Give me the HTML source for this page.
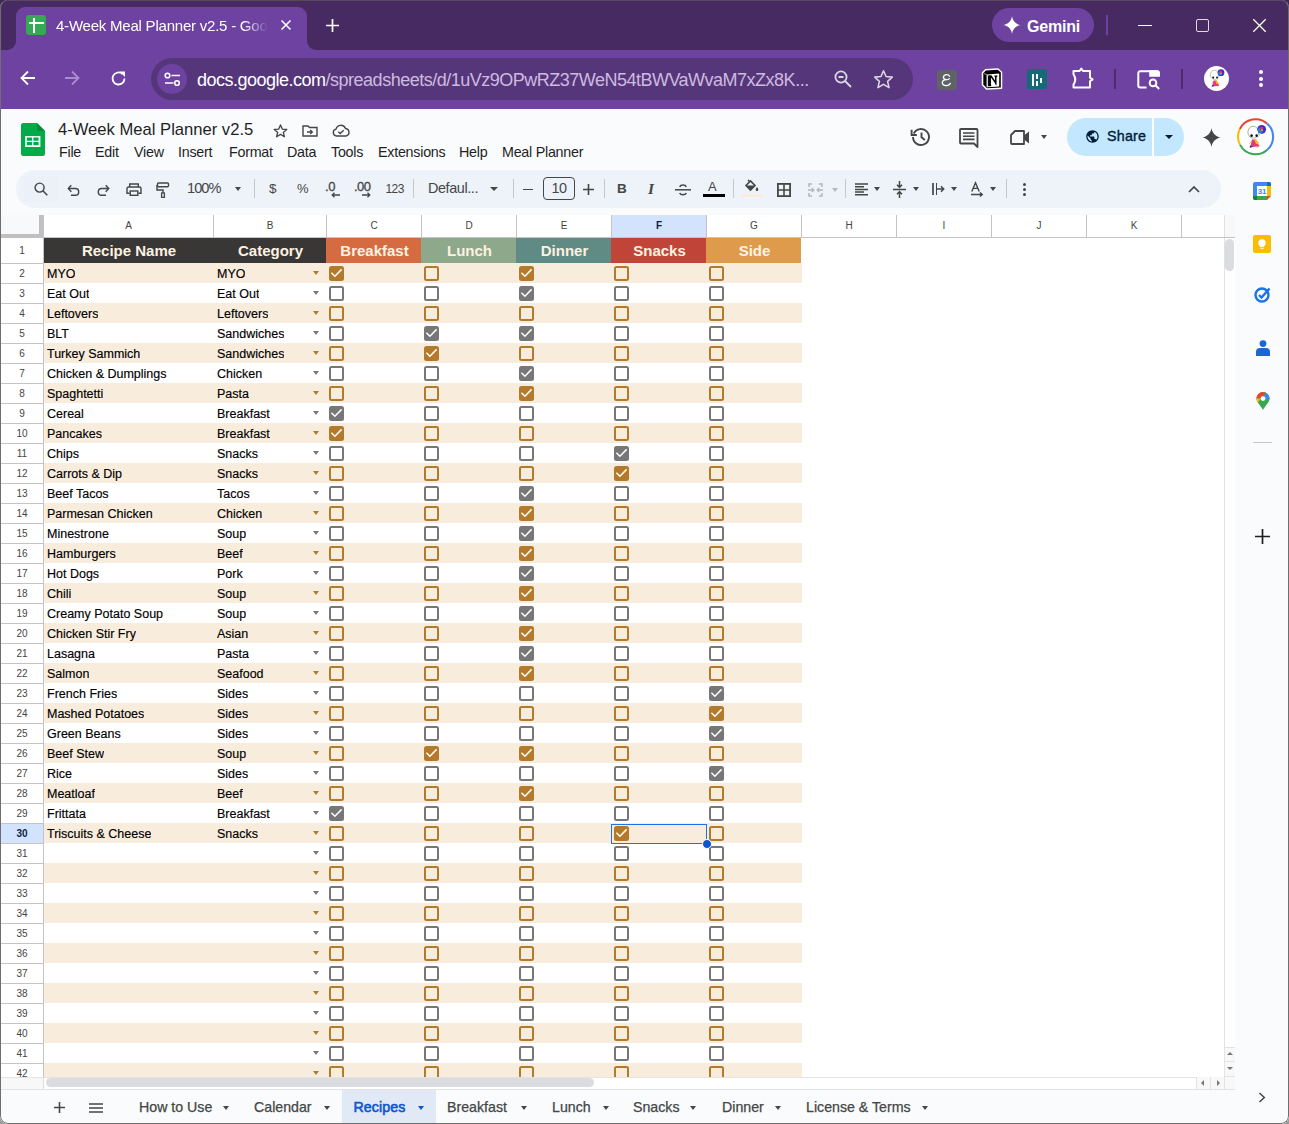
<!DOCTYPE html>
<html><head><meta charset="utf-8">
<style>
*{box-sizing:border-box;margin:0;padding:0}
html,body{width:1289px;height:1124px;overflow:hidden;background:linear-gradient(#3d2a52 0,#3d2a52 50%,#9c9c9c 50%)}
body{font-family:"Liberation Sans",sans-serif;position:relative}
.a{position:absolute}
#win{position:absolute;left:0;top:0;width:1289px;height:1124px;overflow:hidden;border-radius:8px;background:#f9fbfd}
#wb{position:absolute;left:0;top:0;width:1289px;height:1124px;border:1px solid #6e6e6e;border-top-color:#56475e;border-radius:8px;z-index:60;pointer-events:none}
svg{display:block;overflow:visible}
.ib{position:absolute}
.t{position:absolute;white-space:nowrap}
/* grid */
.rh{position:absolute;left:1px;width:42px;text-align:center;font-size:11px;color:#444;border-top:1px solid #c4c4c4;background:#fff}
.row{position:absolute;left:44px;width:758px;height:20px}
.bg1{background:#f8ecdd}
.cell{position:absolute;top:1px;height:19px;line-height:20px;font-size:12.5px;color:#000;-webkit-text-stroke:0.15px #000;white-space:nowrap;overflow:hidden}
.cb{position:absolute;width:15px;height:15px;border-radius:2.5px;top:3px}
.cbu{border:2px solid}
.dd{position:absolute;top:8px;left:269.2px;width:0;height:0;border-left:3.6px solid transparent;border-right:3.6px solid transparent;border-top:4px solid}
.ch{position:absolute;top:215px;height:23px;text-align:center;font-size:11px;line-height:21px;color:#444;border-left:1px solid #c4c4c4;background:#fff}
</style></head><body><div id="win">
<!-- title bar -->
<div class="a" style="left:0;top:0;width:1289px;height:50px;background:#462a61"></div>
<!-- active tab -->
<div class="a" style="left:16px;top:7px;width:291px;height:44px;background:#6e42a1;border-radius:9px 9px 0 0"></div>
<div class="a" style="left:6px;top:40px;width:10px;height:10px;background:#6e42a1"></div>
<div class="a" style="left:6px;top:40px;width:10px;height:10px;background:#462a61;border-radius:0 0 9px 0"></div>
<div class="a" style="left:307px;top:40px;width:10px;height:10px;background:#6e42a1"></div>
<div class="a" style="left:307px;top:40px;width:10px;height:10px;background:#462a61;border-radius:0 0 0 9px"></div>
<!-- favicon -->
<div class="a" style="left:26px;top:15px;width:20px;height:20px;background:#34a853;border-radius:3px"></div>
<div class="a" style="left:28.5px;top:22px;width:15px;height:2.2px;background:#fff"></div>
<div class="a" style="left:32.8px;top:17.5px;width:2.2px;height:15px;background:#fff"></div>
<div class="t" style="left:56px;top:17px;font-size:15px;color:#fff;line-height:18px;letter-spacing:-0.22px;width:212px;overflow:hidden;-webkit-mask-image:linear-gradient(90deg,#000 188px,transparent 212px)">4-Week Meal Planner v2.5 - Google Sheets</div>
<svg class="ib" style="left:281px;top:20px" width="10" height="10"><path d="M0.5 0.5L9.5 9.5M9.5 0.5L0.5 9.5" stroke="#fff" stroke-width="1.6"/></svg>
<svg class="ib" style="left:326px;top:19px" width="13" height="13"><path d="M6.5 0V13M0 6.5H13" stroke="#fff" stroke-width="1.7"/></svg>
<!-- gemini pill -->
<div class="a" style="left:992px;top:8px;width:102px;height:34px;background:#6e42a1;border-radius:17px"></div>
<svg class="ib" style="left:1003px;top:16px" width="18" height="18" viewBox="0 0 24 24"><path d="M12 0C12.6 6.5 17.5 11.4 24 12C17.5 12.6 12.6 17.5 12 24C11.4 17.5 6.5 12.6 0 12C6.5 11.4 11.4 6.5 12 0Z" fill="#fff"/></svg>
<div class="t" style="left:1027px;top:17.5px;font-size:16px;font-weight:700;color:#fff;line-height:18px;letter-spacing:-0.2px">Gemini</div>
<div class="a" style="left:1106px;top:15px;width:2px;height:20px;background:#6e42a1"></div>
<div class="a" style="left:1138px;top:25px;width:14px;height:1.3px;background:#fff"></div>
<div class="a" style="left:1196px;top:19px;width:13px;height:13px;border:1.4px solid #ddd;border-radius:2px"></div>
<svg class="ib" style="left:1253px;top:19px" width="13" height="13"><path d="M0.3 0.3L12.7 12.7M12.7 0.3L0.3 12.7" stroke="#fff" stroke-width="1.3"/></svg>
<!-- address row -->
<div class="a" style="left:0;top:50px;width:1289px;height:59px;background:#6e42a1"></div>
<svg class="ib" style="left:20px;top:70px" width="16" height="16"><path d="M15 8H2M8 1.5L1.5 8L8 14.5" stroke="#fff" stroke-width="1.8" fill="none"/></svg>
<svg class="ib" style="left:64px;top:70px" width="16" height="16"><path d="M1 8H14M8 1.5L14.5 8L8 14.5" stroke="#a98bcf" stroke-width="1.8" fill="none"/></svg>
<svg class="ib" style="left:110px;top:70px" width="17" height="17" viewBox="0 0 17 17"><path d="M14.5 8.5A6 6 0 1 1 12.6 4.1" stroke="#fff" stroke-width="1.8" fill="none"/><path d="M9.5 1.5H15V7Z" fill="#fff"/></svg>
<!-- omnibox -->
<div class="a" style="left:151px;top:58px;width:762px;height:42px;background:#56367b;border-radius:21px"></div>
<div class="a" style="left:157.3px;top:64px;width:30px;height:30px;background:#6e42a1;border-radius:50%"></div>
<svg class="ib" style="left:164px;top:71.8px" width="17" height="15" viewBox="0 0 17 15"><circle cx="3.5" cy="3.5" r="2.3" stroke="#fff" stroke-width="1.6" fill="none"/><path d="M7.5 3.5H16" stroke="#fff" stroke-width="1.6"/><circle cx="13" cy="11" r="2.3" stroke="#fff" stroke-width="1.6" fill="none"/><path d="M1 11H9.5" stroke="#fff" stroke-width="1.6"/></svg>
<div class="t" style="left:197px;top:69px;font-size:18px;line-height:22px;color:#fff;letter-spacing:-0.5px">docs.google.com<span style="color:#cdbadf">/spreadsheets/d/1uVz9OPwRZ37WeN54tBWVaWvaM7xZx8K...</span></div>
<svg class="ib" style="left:834px;top:70px" width="18" height="18" viewBox="0 0 18 18"><circle cx="7" cy="7" r="5.6" stroke="#dcd6e2" stroke-width="1.8" fill="none"/><path d="M11 11L17 17M4.5 7H9.5" stroke="#dcd6e2" stroke-width="1.8"/></svg>
<svg class="ib" style="left:872.5px;top:68.5px" width="21" height="21" viewBox="0 0 24 24"><path d="M12 2L14.9 8.6L22 9.3L16.7 14.1L18.3 21.3L12 17.6L5.7 21.3L7.3 14.1L2 9.3L9.1 8.6Z" stroke="#dcd6e2" stroke-width="1.8" fill="none" stroke-linejoin="round"/></svg>
<!-- extensions -->
<div class="a" style="left:937px;top:70px;width:19.5px;height:19.5px;background:#5f6368;border-radius:2px"></div>
<svg class="ib" style="left:937px;top:70px" width="20" height="20" viewBox="0 0 20 20"><path d="M12.6 6.2C12 5 10.8 4.6 9.6 4.6C7.6 4.6 6.4 5.9 6.4 7.3C6.4 8.7 7.6 9.6 9.4 9.7C7.1 9.6 5.3 10.9 5.3 12.6C5.3 14.4 7.1 15.6 9.3 15.6C11.2 15.6 12.6 14.7 13.4 13.4" stroke="#fff" stroke-width="1.3" fill="none" stroke-linecap="round"/><path d="M9.4 9.7C10.6 9.7 11.8 9.4 12.4 8.6" stroke="#fff" stroke-width="1.1" fill="none" stroke-linecap="round"/></svg>
<svg class="ib" style="left:981px;top:68px" width="22" height="22" viewBox="0 0 22 22"><path d="M4.5 1.8L17 1L20.5 4.2V20.2L5.5 21L1.5 16.8V4.8Z" fill="#fff" stroke="#fff" stroke-width="1.5" stroke-linejoin="round"/><path d="M4.8 2.5L16.8 1.8L19.8 4.5V19.5L5.8 20.3L2.3 16.6V5.2Z" fill="#000"/><path d="M6.2 6.4L18.2 5.6V18.5L6.2 19.2Z" fill="#fff"/><path d="M3 5.6L5.8 6.6V19.3" stroke="#fff" stroke-width="0.6" fill="none"/><path d="M7.8 8V17.4M7.3 8H10L14.8 15V8.2M9.2 8.7V17.4M13.5 8.2H16.3M7 17.4H10.2M14.8 15.3V16.6" stroke="#000" stroke-width="1.5" fill="none"/></svg>
<div class="a" style="left:1026.5px;top:69px;width:20px;height:20px;background:#146a77;border-radius:2px"></div>
<div class="a" style="left:1032px;top:73.5px;width:2.4px;height:12px;background:#fff"></div>
<div class="a" style="left:1035.8px;top:73.5px;width:2.2px;height:5px;background:#fff"></div>
<div class="a" style="left:1035.8px;top:80.5px;width:2.2px;height:5px;background:#fff"></div>
<div class="a" style="left:1039.5px;top:77.5px;width:2.2px;height:5px;background:#fff"></div>
<svg class="ib" style="left:1071px;top:66px" width="24" height="24" viewBox="0 0 24 24"><path d="M2.5 5H8.6L10.3 2.6L12 5H19V11.6L21.6 13.4L19 15.2V21.5H2.5V18.6Q6 13.4 2.5 8.2Z" stroke="#fff" stroke-width="2" fill="none" stroke-linejoin="round"/></svg>
<div class="a" style="left:1113.5px;top:69px;width:2px;height:19.5px;background:#4c2b71"></div>
<svg class="ib" style="left:1136px;top:69px" width="26" height="22" viewBox="0 0 26 22"><path d="M10.5 18.5H4.3A2 2 0 0 1 2.3 16.5V4.2A2 2 0 0 1 4.3 2.2H20.9A2 2 0 0 1 22.9 4.2V7" stroke="#fff" stroke-width="2" fill="none"/><path d="M13.2 1.2H21A2.9 2.9 0 0 1 23.9 4.1V7.7H13.2Z" fill="#fff"/><circle cx="17" cy="13.9" r="3.3" stroke="#fff" stroke-width="2" fill="none"/><path d="M19.4 16.3L23.2 20" stroke="#fff" stroke-width="2"/></svg>
<div class="a" style="left:1181px;top:69px;width:2px;height:19.5px;background:#4c2b71"></div>
<div class="a" style="left:1204px;top:66px;width:25.2px;height:25.2px;background:#fff;border-radius:50%"></div>
<svg class="ib" style="left:1202.3px;top:64.3px" width="28.4" height="28.4" viewBox="0 0 37 37"><ellipse cx="16.2" cy="14.2" rx="5.3" ry="6" fill="#fff" stroke="#8a8a8a" stroke-width="0.7"/><ellipse cx="14.6" cy="17.7" rx="1.3" ry="1.4" fill="#111"/><ellipse cx="19.6" cy="17.7" rx="1.2" ry="1.4" fill="#111"/><path d="M23 15.5Q22 19 19.5 20.5" stroke="#aaa" stroke-width="0.6" fill="none"/><path d="M14.5 23L12.5 25.5M20 23L22 25.5M14.5 29.5H12.5M19.5 29.5H21" stroke="#bbb" stroke-width="0.8" fill="none"/><circle cx="24.7" cy="11.3" r="4.4" fill="#3a2ec4"/><circle cx="23.6" cy="12.2" r="2.6" fill="#1c8fc8"/><ellipse cx="24.6" cy="10.8" rx="1.6" ry="2.2" fill="#e0305a"/><rect x="24" y="11.5" width="1.8" height="1.2" fill="#f6c026"/><path d="M15 21.5H18.8L22.5 28.2L13.2 29.3Z" fill="#e43a78"/><path d="M17.2 21.5H19.5L21.5 25.5L19 26Z" fill="#f5c21a"/><path d="M13 27.2L15.8 28.8L12.8 29.8Z" fill="#2737c9"/><path d="M19.5 26L22.5 28.2L20.5 28.6Z" fill="#e8641c"/></svg>
<div class="a" style="left:1259.4px;top:69.6px;width:4px;height:4px;background:#fff;border-radius:50%"></div>
<div class="a" style="left:1259.4px;top:76.5px;width:4px;height:4px;background:#fff;border-radius:50%"></div>
<div class="a" style="left:1259.4px;top:83.4px;width:4px;height:4px;background:#fff;border-radius:50%"></div>
<!-- docs header -->
<svg class="ib" style="left:21px;top:123px" width="24" height="33" viewBox="0 0 24 33"><path d="M2.5 0H16L24 8V30.5A2.5 2.5 0 0 1 21.5 33H2.5A2.5 2.5 0 0 1 0 30.5V2.5A2.5 2.5 0 0 1 2.5 0Z" fill="#00ac47"/><path d="M16 0L24 8H17A1 1 0 0 1 16 7Z" fill="#038c3a"/><rect x="4.1" y="13.1" width="15.3" height="10.9" fill="#fff"/><rect x="5.9" y="14.6" width="5.2" height="3.2" rx="0.5" fill="#00ac47"/><rect x="12.4" y="14.6" width="5.2" height="3.2" rx="0.5" fill="#00ac47"/><rect x="5.9" y="19.1" width="5.2" height="3.2" rx="0.5" fill="#00ac47"/><rect x="12.4" y="19.1" width="5.2" height="3.2" rx="0.5" fill="#00ac47"/></svg>
<div class="t" style="left:58px;top:120px;font-size:16.6px;line-height:20px;color:#1f1f1f">4-Week Meal Planner v2.5</div>
<svg class="ib" style="left:273px;top:124px" width="15" height="14" viewBox="0 0 24 23"><path d="M12 1.5L14.9 8.4L22.3 9L16.6 13.8L18.4 21L12 17.1L5.6 21L7.4 13.8L1.7 9L9.1 8.4Z" stroke="#444746" stroke-width="2.2" fill="none" stroke-linejoin="round"/></svg>
<svg class="ib" style="left:302px;top:125px" width="16" height="12" viewBox="0 0 16 12"><path d="M1 1H6L7.5 2.5H15V11H1Z" stroke="#444746" stroke-width="1.4" fill="none"/><path d="M5 7H10M8.3 5L10.3 7L8.3 9" stroke="#444746" stroke-width="1.3" fill="none"/></svg>
<svg class="ib" style="left:332px;top:125px" width="18" height="12" viewBox="0 0 18 12"><path d="M4.5 11A3.5 3.5 0 0 1 4 4.1A5 5 0 0 1 13.5 3.5A3.8 3.8 0 0 1 14 11Z" stroke="#444746" stroke-width="1.4" fill="none"/><path d="M6.3 6.8L8.2 8.6L11.7 5.2" stroke="#444746" stroke-width="1.4" fill="none"/></svg>
<div class="t" style="top:144px;font-size:14.3px;line-height:17px;color:#1f1f1f;left:0;width:600px;letter-spacing:-0.25px">
<span class="t" style="left:59px">File</span><span class="t" style="left:95px">Edit</span><span class="t" style="left:134px">View</span><span class="t" style="left:178px">Insert</span><span class="t" style="left:229px">Format</span><span class="t" style="left:287px">Data</span><span class="t" style="left:331px">Tools</span><span class="t" style="left:378px">Extensions</span><span class="t" style="left:459px">Help</span><span class="t" style="left:502px">Meal Planner</span>
</div>
<!-- right icons -->
<svg class="ib" style="left:911px;top:127px" width="20" height="20" viewBox="0 0 20 20"><path d="M2.8 6.5A8 8 0 1 1 2 10" stroke="#444746" stroke-width="1.9" fill="none"/><path d="M0.6 2.8V8H5.8" stroke="#444746" stroke-width="1.9" fill="none"/><path d="M10.5 5.5V10.3L13.8 13" stroke="#444746" stroke-width="1.9" fill="none"/></svg>
<svg class="ib" style="left:959px;top:128px" width="20" height="20" viewBox="0 0 20 20"><path d="M1 2A1 1 0 0 1 2 1H17.5A1 1 0 0 1 18.5 2V19L15 15.5H2A1 1 0 0 1 1 14.5Z" stroke="#444746" stroke-width="1.8" fill="none" stroke-linejoin="round"/><path d="M4 5H15.5M4 8.2H15.5M4 11.4H15.5" stroke="#444746" stroke-width="1.6"/></svg>
<svg class="ib" style="left:1010px;top:130px" width="20" height="15" viewBox="0 0 20 15"><path d="M5 1H14V14H2A1 1 0 0 1 1 13V5Z" stroke="#444746" stroke-width="1.8" fill="none" stroke-linejoin="round"/><path d="M14 5.5L19 1.5V13.5L14 9.5Z" fill="#444746"/></svg>
<div class="a" style="left:1041px;top:135px;border-left:3.5px solid transparent;border-right:3.5px solid transparent;border-top:4px solid #444746"></div>
<div class="a" style="left:1067px;top:118px;width:117px;height:38px;background:#c2e7ff;border-radius:19px"></div>
<div class="a" style="left:1152px;top:118px;width:1.5px;height:38px;background:#fff"></div>
<svg class="ib" style="left:1085px;top:129px" width="15" height="15" viewBox="0 0 24 24"><path d="M12 2C6.48 2 2 6.48 2 12s4.48 10 10 10 10-4.48 10-10S17.52 2 12 2zm-1 17.93c-3.95-.49-7-3.85-7-7.93 0-.62.08-1.21.21-1.79L9 15v1c0 1.1.9 2 2 2v1.93zm6.9-2.54c-.26-.81-1-1.39-1.9-1.39h-1v-3c0-.55-.45-1-1-1H8v-2h2c.55 0 1-.45 1-1V7h2c1.1 0 2-.9 2-2v-.41c2.93 1.19 5 4.06 5 7.41 0 2.08-.8 3.97-2.1 5.39z" fill="#001d35"/></svg>
<div class="t" style="left:1107px;top:128px;font-size:14.3px;line-height:17px;color:#001d35;-webkit-text-stroke:0.35px #001d35;letter-spacing:0.2px">Share</div>
<div class="a" style="left:1165px;top:135px;border-left:4px solid transparent;border-right:4px solid transparent;border-top:4.5px solid #001d35"></div>
<svg class="ib" style="left:1202px;top:128px" width="19" height="19" viewBox="0 0 24 24"><path d="M12 0C12.7 6.4 17.6 11.3 24 12C17.6 12.7 12.7 17.6 12 24C11.3 17.6 6.4 12.7 0 12C6.4 11.3 11.3 6.4 12 0Z" fill="#444746"/></svg>
<svg class="ib" style="left:1237px;top:118px" width="37" height="37" viewBox="0 0 37 37"><circle cx="18.6" cy="18.7" r="17" fill="#fff"/><path d="M2.87 11.03A17.5 17.5 0 0 1 30.31 5.69" stroke="#ea4335" stroke-width="2" fill="none"/><path d="M30.31 5.69A17.5 17.5 0 0 1 30.31 31.71" stroke="#4285f4" stroke-width="2" fill="none"/><path d="M30.31 31.71A17.5 17.5 0 0 1 3.01 26.64" stroke="#34a853" stroke-width="2" fill="none"/><path d="M3.01 26.64A17.5 17.5 0 0 1 2.87 11.03" stroke="#fbbc04" stroke-width="2" fill="none"/><ellipse cx="16.2" cy="14.2" rx="5.3" ry="6" fill="#fff" stroke="#8a8a8a" stroke-width="0.7"/><ellipse cx="14.6" cy="17.7" rx="1.3" ry="1.4" fill="#111"/><ellipse cx="19.6" cy="17.7" rx="1.2" ry="1.4" fill="#111"/><path d="M23 15.5Q22 19 19.5 20.5" stroke="#aaa" stroke-width="0.6" fill="none"/><path d="M14.5 23L12.5 25.5M20 23L22 25.5M14.5 29.5H12.5M19.5 29.5H21" stroke="#bbb" stroke-width="0.8" fill="none"/><circle cx="24.7" cy="11.3" r="4.4" fill="#3a2ec4"/><circle cx="23.6" cy="12.2" r="2.6" fill="#1c8fc8"/><ellipse cx="24.6" cy="10.8" rx="1.6" ry="2.2" fill="#e0305a"/><rect x="24" y="11.5" width="1.8" height="1.2" fill="#f6c026"/><path d="M15 21.5H18.8L22.5 28.2L13.2 29.3Z" fill="#e43a78"/><path d="M17.2 21.5H19.5L21.5 25.5L19 26Z" fill="#f5c21a"/><path d="M13 27.2L15.8 28.8L12.8 29.8Z" fill="#2737c9"/><path d="M19.5 26L22.5 28.2L20.5 28.6Z" fill="#e8641c"/></svg>
<!-- toolbar -->
<div class="a" style="left:16px;top:170px;width:1205px;height:38px;background:#eef2f9;border-radius:19px"></div>
<div class="a" style="left:24px;top:176px;width:35px;height:26px;background:#ebf0f9;border-radius:2px"></div>
<svg class="ib" style="left:34px;top:182px" width="14" height="14" viewBox="0 0 14 14"><circle cx="5.6" cy="5.6" r="4.5" stroke="#444746" stroke-width="1.45" fill="none"/><path d="M8.8 8.8L13.3 13.3" stroke="#444746" stroke-width="1.6"/></svg>
<svg class="ib" style="left:67px;top:184px" width="13" height="12" viewBox="0 0 13 12"><path d="M1.5 4.5H8.3A3.4 3.4 0 0 1 8.3 11.3H4" stroke="#444746" stroke-width="1.45" fill="none"/><path d="M4.3 1.2L1.3 4.5L4.3 7.8" stroke="#444746" stroke-width="1.45" fill="none"/></svg>
<svg class="ib" style="left:97px;top:184px" width="13" height="12" viewBox="0 0 13 12"><path d="M11.5 4.5H4.7A3.4 3.4 0 0 0 4.7 11.3H9" stroke="#444746" stroke-width="1.45" fill="none"/><path d="M8.7 1.2L11.7 4.5L8.7 7.8" stroke="#444746" stroke-width="1.45" fill="none"/></svg>
<svg class="ib" style="left:126px;top:183px" width="16" height="13" viewBox="0 0 16 13"><path d="M3.7 4V1H12.3V4" stroke="#444746" stroke-width="1.4" fill="none"/><path d="M3.7 10.3H1V5.5A1.5 1.5 0 0 1 2.5 4H13.5A1.5 1.5 0 0 1 15 5.5V10.3H12.3" stroke="#444746" stroke-width="1.4" fill="none"/><rect x="4.2" y="8" width="7.6" height="4.3" stroke="#444746" stroke-width="1.4" fill="none"/></svg>
<svg class="ib" style="left:156px;top:182px" width="14" height="16" viewBox="0 0 14 16"><rect x="1.5" y="1" width="11" height="3.8" rx="1" stroke="#444746" stroke-width="1.4" fill="none"/><path d="M1 3V8H7V11" stroke="#444746" stroke-width="1.4" fill="none"/><rect x="5.6" y="11" width="2.8" height="4.3" stroke="#444746" stroke-width="1.3" fill="none"/></svg>
<div class="t" style="left:187px;top:180px;font-size:14.6px;line-height:17px;color:#444746;letter-spacing:-0.95px">100%</div>
<div class="a" style="left:235px;top:187px;border-left:3.5px solid transparent;border-right:3.5px solid transparent;border-top:4px solid #444746"></div>
<div class="a" style="left:254px;top:179px;width:1px;height:19px;background:#c7c7c7"></div>
<div class="t" style="left:269px;top:181px;font-size:13.6px;line-height:16px;color:#444746">$</div>
<div class="t" style="left:297px;top:181px;font-size:13px;line-height:16px;color:#444746">%</div>
<div class="t" style="left:325px;top:180px;font-size:13px;line-height:14px;color:#444746;letter-spacing:-0.3px;-webkit-text-stroke:0.3px #444746">.0</div>
<svg class="ib" style="left:331px;top:192px" width="9" height="6" viewBox="0 0 9 6"><path d="M9 3H1.5M3.5 0.8L1.2 3L3.5 5.2" stroke="#444746" stroke-width="1.3" fill="none"/></svg>
<div class="t" style="left:354px;top:180px;font-size:13px;line-height:14px;color:#444746;letter-spacing:-0.5px;-webkit-text-stroke:0.3px #444746">.00</div>
<svg class="ib" style="left:362px;top:192px" width="9" height="6" viewBox="0 0 9 6"><path d="M0 3H7.5M5.5 0.8L7.8 3L5.5 5.2" stroke="#444746" stroke-width="1.3" fill="none"/></svg>
<div class="t" style="left:385.5px;top:182px;font-size:12px;line-height:14px;color:#444746;letter-spacing:-0.6px">123</div>
<div class="a" style="left:413px;top:179px;width:1px;height:19px;background:#c7c7c7"></div>
<div class="t" style="left:428px;top:180px;font-size:14.4px;line-height:17px;color:#444746;letter-spacing:-0.4px">Defaul...</div>
<div class="a" style="left:490px;top:187px;border-left:4px solid transparent;border-right:4px solid transparent;border-top:4.5px solid #444746"></div>
<div class="a" style="left:513px;top:179px;width:1px;height:19px;background:#c7c7c7"></div>
<div class="a" style="left:522.5px;top:188.5px;width:10.5px;height:1.6px;background:#444746"></div>
<div class="a" style="left:543px;top:177px;width:32px;height:23px;border:1px solid #444746;border-radius:4px"></div>
<div class="t" style="left:543px;top:180px;width:32px;text-align:center;font-size:14.4px;line-height:17px;color:#444746;letter-spacing:-0.4px">10</div>
<svg class="ib" style="left:583px;top:184px" width="11" height="11"><path d="M5.5 0V11M0 5.5H11" stroke="#444746" stroke-width="1.6"/></svg>
<div class="a" style="left:604px;top:179px;width:1px;height:19px;background:#c7c7c7"></div>
<div class="t" style="left:617px;top:181px;font-size:13.5px;line-height:16px;color:#444746;font-weight:700">B</div>
<div class="t" style="left:648px;top:181px;font-size:15.5px;line-height:16px;color:#444746;font-style:italic;font-weight:700;font-family:'Liberation Serif'">I</div>
<svg class="ib" style="left:675px;top:183px" width="16" height="14" viewBox="0 0 16 14"><path d="M0 6.8H16" stroke="#444746" stroke-width="1.5"/><path d="M11.3 3.8A3.5 2.6 0 0 0 4.7 3.8M4.7 10A3.5 2.6 0 0 0 11.3 10" stroke="#444746" stroke-width="1.6" fill="none"/></svg>
<div class="t" style="left:708px;top:179px;font-size:13px;line-height:15px;color:#444746">A</div>
<div class="a" style="left:703px;top:194px;width:22px;height:3px;background:#000"></div>
<div class="a" style="left:733px;top:179px;width:1px;height:19px;background:#c7c7c7"></div>
<svg class="ib" style="left:744px;top:179px" width="15" height="13" viewBox="0 0 15 13"><path d="M4 1L5.5 2.5M2 6.5L6.5 2L11 6.5L6.5 11Z" stroke="#444746" stroke-width="1.6" fill="none"/><path d="M2 6.5H11L6.5 11Z" fill="#444746"/><path d="M13 8C13.8 9.2 14.3 10 14.3 10.8A1.3 1.3 0 0 1 11.7 10.8C11.7 10 12.2 9.2 13 8Z" fill="#444746"/></svg>
<div class="a" style="left:742px;top:194px;width:21px;height:3px;background:#f9ecdf"></div>
<svg class="ib" style="left:777px;top:183px" width="14" height="14" viewBox="0 0 14 14"><rect x="0.9" y="0.9" width="12.2" height="12.2" stroke="#444746" stroke-width="1.8" fill="none"/><path d="M7 1V13M1 7H13" stroke="#444746" stroke-width="1.6"/></svg>
<svg class="ib" style="left:808px;top:183px" width="15" height="14" viewBox="0 0 15 14"><path d="M1 4V1H4M11 1H14V4M14 10V13H11M4 13H1V10" stroke="#b4b7bb" stroke-width="1.5" fill="none"/><path d="M0 7H5.5M3.8 5L5.8 7L3.8 9M15 7H9.5M11.2 5L9.2 7L11.2 9" stroke="#b4b7bb" stroke-width="1.4" fill="none"/></svg>
<div class="a" style="left:832px;top:188px;border-left:3.5px solid transparent;border-right:3.5px solid transparent;border-top:4px solid #b4b7bb"></div>
<div class="a" style="left:845px;top:179px;width:1px;height:19px;background:#c7c7c7"></div>
<svg class="ib" style="left:855px;top:183px" width="14" height="13" viewBox="0 0 14 13"><path d="M0 1H13M0 3.7H9M0 6.4H13M0 9.1H9M0 11.8H13" stroke="#444746" stroke-width="1.5"/></svg>
<div class="a" style="left:874px;top:187px;border-left:3.5px solid transparent;border-right:3.5px solid transparent;border-top:4px solid #444746"></div>
<svg class="ib" style="left:893px;top:181px" width="13" height="17" viewBox="0 0 13 17"><path d="M0 8.5H13" stroke="#444746" stroke-width="1.5"/><path d="M6.5 0V6M4 3.7L6.5 6.3L9 3.7M6.5 17V11M4 13.3L6.5 10.7L9 13.3" stroke="#444746" stroke-width="1.5" fill="none"/></svg>
<div class="a" style="left:913px;top:187px;border-left:3.5px solid transparent;border-right:3.5px solid transparent;border-top:4px solid #444746"></div>
<svg class="ib" style="left:932px;top:182px" width="13" height="14" viewBox="0 0 13 14"><path d="M1 1V13" stroke="#444746" stroke-width="1.7"/><path d="M4.5 1V13" stroke="#444746" stroke-width="1"/><path d="M4.5 7H11.5M9 4.3L11.7 7L9 9.7" stroke="#444746" stroke-width="1.5" fill="none"/></svg>
<div class="a" style="left:951px;top:187px;border-left:3.5px solid transparent;border-right:3.5px solid transparent;border-top:4px solid #444746"></div>
<svg class="ib" style="left:971px;top:182px" width="13" height="15" viewBox="0 0 13 15"><path d="M0.8 9.5L4.5 0.8L8.2 9.5M2.2 6.4H6.8" stroke="#444746" stroke-width="1.4" fill="none"/><path d="M0 12.5H11M9 10.5L11.2 12.5L9 14.5" stroke="#444746" stroke-width="1.5" fill="none"/></svg>
<div class="a" style="left:990px;top:187px;border-left:3.5px solid transparent;border-right:3.5px solid transparent;border-top:4px solid #444746"></div>
<div class="a" style="left:1006px;top:179px;width:1px;height:19px;background:#c7c7c7"></div>
<div class="a" style="left:1023px;top:183px;width:3.2px;height:3.2px;background:#444746;border-radius:50%"></div>
<div class="a" style="left:1023px;top:188px;width:3.2px;height:3.2px;background:#444746;border-radius:50%"></div>
<div class="a" style="left:1023px;top:193px;width:3.2px;height:3.2px;background:#444746;border-radius:50%"></div>
<svg class="ib" style="left:1188px;top:186px" width="12" height="7" viewBox="0 0 12 7"><path d="M1 6L6 1L11 6" stroke="#444746" stroke-width="1.7" fill="none"/></svg>
<div class="a" style="left:0;top:215px;width:1235px;height:874px;background:#fff;overflow:hidden">
<div class="a" style="left:43px;top:0;width:170px;height:22px;background:#fff;border-left:1px solid #c4c4c4;text-align:center;font-size:10px;line-height:21px;color:#444;">A</div>
<div class="a" style="left:213px;top:0;width:113px;height:22px;background:#fff;border-left:1px solid #c4c4c4;text-align:center;font-size:10px;line-height:21px;color:#444;">B</div>
<div class="a" style="left:326px;top:0;width:95px;height:22px;background:#fff;border-left:1px solid #c4c4c4;text-align:center;font-size:10px;line-height:21px;color:#444;">C</div>
<div class="a" style="left:421px;top:0;width:95px;height:22px;background:#fff;border-left:1px solid #c4c4c4;text-align:center;font-size:10px;line-height:21px;color:#444;">D</div>
<div class="a" style="left:516px;top:0;width:95px;height:22px;background:#fff;border-left:1px solid #c4c4c4;text-align:center;font-size:10px;line-height:21px;color:#444;">E</div>
<div class="a" style="left:611px;top:0;width:95px;height:22px;background:#d3e3fd;border-left:1px solid #c4c4c4;text-align:center;font-size:10px;line-height:21px;color:#0b1f44;font-weight:700;">F</div>
<div class="a" style="left:706px;top:0;width:95px;height:22px;background:#fff;border-left:1px solid #c4c4c4;text-align:center;font-size:10px;line-height:21px;color:#444;">G</div>
<div class="a" style="left:801px;top:0;width:95px;height:22px;background:#fff;border-left:1px solid #c4c4c4;text-align:center;font-size:10px;line-height:21px;color:#444;">H</div>
<div class="a" style="left:896px;top:0;width:95px;height:22px;background:#fff;border-left:1px solid #c4c4c4;text-align:center;font-size:10px;line-height:21px;color:#444;">I</div>
<div class="a" style="left:991px;top:0;width:95px;height:22px;background:#fff;border-left:1px solid #c4c4c4;text-align:center;font-size:10px;line-height:21px;color:#444;">J</div>
<div class="a" style="left:1086px;top:0;width:95px;height:22px;background:#fff;border-left:1px solid #c4c4c4;text-align:center;font-size:10px;line-height:21px;color:#444;">K</div>
<div class="a" style="left:1181px;top:0;width:43px;height:22px;background:#fff;border-left:1px solid #c4c4c4;text-align:center;font-size:10px;line-height:21px;color:#444;"></div>
<div class="a" style="left:43px;top:22px;width:1181px;height:1px;background:#c4c4c4"></div>
<div class="a" style="left:1px;top:0;width:42px;height:23px;background:#f8f9fa"></div>
<div class="a" style="left:39px;top:0;width:4px;height:23px;background:#c0c0c0"></div>
<div class="a" style="left:1px;top:19px;width:42px;height:4px;background:#c0c0c0"></div>
<div class="a" style="left:43px;top:23px;width:170px;height:25px;background:#393735;text-align:center;padding-left:2px;font-size:15px;font-weight:700;line-height:25px;color:#fdf2e2">Recipe Name</div>
<div class="a" style="left:213px;top:23px;width:113px;height:25px;background:#393735;text-align:center;padding-left:2px;font-size:15px;font-weight:700;line-height:25px;color:#fdf2e2">Category</div>
<div class="a" style="left:326px;top:23px;width:95px;height:25px;background:#d66b42;text-align:center;padding-left:2px;font-size:15px;font-weight:700;line-height:25px;color:#fdf2e2">Breakfast</div>
<div class="a" style="left:421px;top:23px;width:95px;height:25px;background:#8da88a;text-align:center;padding-left:2px;font-size:15px;font-weight:700;line-height:25px;color:#fdf2e2">Lunch</div>
<div class="a" style="left:516px;top:23px;width:95px;height:25px;background:#5f8b84;text-align:center;padding-left:2px;font-size:15px;font-weight:700;line-height:25px;color:#fdf2e2">Dinner</div>
<div class="a" style="left:611px;top:23px;width:95px;height:25px;background:#c04538;text-align:center;padding-left:2px;font-size:15px;font-weight:700;line-height:25px;color:#fdf2e2">Snacks</div>
<div class="a" style="left:706px;top:23px;width:95px;height:25px;background:#dd9b4b;text-align:center;padding-left:2px;font-size:15px;font-weight:700;line-height:25px;color:#fdf2e2">Side</div>
<div class="a" style="left:1px;top:23px;width:42px;height:25px;text-align:center;font-size:10px;line-height:25px;color:#444">1</div>
<div class="a" style="left:43px;top:0;width:1px;height:874px;background:#c4c4c4"></div>
<div class="a" style="left:1px;top:48px;width:42px;height:20px;border-top:1px solid #c4c4c4;background:#fff;text-align:center;font-size:10px;line-height:19px;color:#444;">2</div>
<div class="row bg1" style="top:48px"><div class="cell" style="left:3px">MYO</div><div class="cell" style="left:173px">MYO</div><div class="dd" style="border-top-color:#b47a2c"></div><div class="cb" style="left:285px;background:#b47a2c"><svg width="15" height="15" style="position:absolute;left:0;top:0"><path d="M2.4 6.8L5.9 10.2L12.6 3.4" stroke="#fff" stroke-width="1.5" fill="none"/></svg></div><div class="cb cbu" style="left:380px;border-color:#b47a2c"></div><div class="cb" style="left:475px;background:#b47a2c"><svg width="15" height="15" style="position:absolute;left:0;top:0"><path d="M2.4 6.8L5.9 10.2L12.6 3.4" stroke="#fff" stroke-width="1.5" fill="none"/></svg></div><div class="cb cbu" style="left:570px;border-color:#b47a2c"></div><div class="cb cbu" style="left:665px;border-color:#b47a2c"></div></div>
<div class="a" style="left:1px;top:68px;width:42px;height:20px;border-top:1px solid #c4c4c4;background:#fff;text-align:center;font-size:10px;line-height:19px;color:#444;">3</div>
<div class="row" style="top:68px"><div class="cell" style="left:3px">Eat Out</div><div class="cell" style="left:173px">Eat Out</div><div class="dd" style="border-top-color:#777777"></div><div class="cb cbu" style="left:285px;border-color:#777777"></div><div class="cb cbu" style="left:380px;border-color:#777777"></div><div class="cb" style="left:475px;background:#777777"><svg width="15" height="15" style="position:absolute;left:0;top:0"><path d="M2.4 6.8L5.9 10.2L12.6 3.4" stroke="#fff" stroke-width="1.5" fill="none"/></svg></div><div class="cb cbu" style="left:570px;border-color:#777777"></div><div class="cb cbu" style="left:665px;border-color:#777777"></div></div>
<div class="a" style="left:1px;top:88px;width:42px;height:20px;border-top:1px solid #c4c4c4;background:#fff;text-align:center;font-size:10px;line-height:19px;color:#444;">4</div>
<div class="row bg1" style="top:88px"><div class="cell" style="left:3px">Leftovers</div><div class="cell" style="left:173px">Leftovers</div><div class="dd" style="border-top-color:#b47a2c"></div><div class="cb cbu" style="left:285px;border-color:#b47a2c"></div><div class="cb cbu" style="left:380px;border-color:#b47a2c"></div><div class="cb cbu" style="left:475px;border-color:#b47a2c"></div><div class="cb cbu" style="left:570px;border-color:#b47a2c"></div><div class="cb cbu" style="left:665px;border-color:#b47a2c"></div></div>
<div class="a" style="left:1px;top:108px;width:42px;height:20px;border-top:1px solid #c4c4c4;background:#fff;text-align:center;font-size:10px;line-height:19px;color:#444;">5</div>
<div class="row" style="top:108px"><div class="cell" style="left:3px">BLT</div><div class="cell" style="left:173px">Sandwiches</div><div class="dd" style="border-top-color:#777777"></div><div class="cb cbu" style="left:285px;border-color:#777777"></div><div class="cb" style="left:380px;background:#777777"><svg width="15" height="15" style="position:absolute;left:0;top:0"><path d="M2.4 6.8L5.9 10.2L12.6 3.4" stroke="#fff" stroke-width="1.5" fill="none"/></svg></div><div class="cb" style="left:475px;background:#777777"><svg width="15" height="15" style="position:absolute;left:0;top:0"><path d="M2.4 6.8L5.9 10.2L12.6 3.4" stroke="#fff" stroke-width="1.5" fill="none"/></svg></div><div class="cb cbu" style="left:570px;border-color:#777777"></div><div class="cb cbu" style="left:665px;border-color:#777777"></div></div>
<div class="a" style="left:1px;top:128px;width:42px;height:20px;border-top:1px solid #c4c4c4;background:#fff;text-align:center;font-size:10px;line-height:19px;color:#444;">6</div>
<div class="row bg1" style="top:128px"><div class="cell" style="left:3px">Turkey Sammich</div><div class="cell" style="left:173px">Sandwiches</div><div class="dd" style="border-top-color:#b47a2c"></div><div class="cb cbu" style="left:285px;border-color:#b47a2c"></div><div class="cb" style="left:380px;background:#b47a2c"><svg width="15" height="15" style="position:absolute;left:0;top:0"><path d="M2.4 6.8L5.9 10.2L12.6 3.4" stroke="#fff" stroke-width="1.5" fill="none"/></svg></div><div class="cb cbu" style="left:475px;border-color:#b47a2c"></div><div class="cb cbu" style="left:570px;border-color:#b47a2c"></div><div class="cb cbu" style="left:665px;border-color:#b47a2c"></div></div>
<div class="a" style="left:1px;top:148px;width:42px;height:20px;border-top:1px solid #c4c4c4;background:#fff;text-align:center;font-size:10px;line-height:19px;color:#444;">7</div>
<div class="row" style="top:148px"><div class="cell" style="left:3px">Chicken &amp; Dumplings</div><div class="cell" style="left:173px">Chicken</div><div class="dd" style="border-top-color:#777777"></div><div class="cb cbu" style="left:285px;border-color:#777777"></div><div class="cb cbu" style="left:380px;border-color:#777777"></div><div class="cb" style="left:475px;background:#777777"><svg width="15" height="15" style="position:absolute;left:0;top:0"><path d="M2.4 6.8L5.9 10.2L12.6 3.4" stroke="#fff" stroke-width="1.5" fill="none"/></svg></div><div class="cb cbu" style="left:570px;border-color:#777777"></div><div class="cb cbu" style="left:665px;border-color:#777777"></div></div>
<div class="a" style="left:1px;top:168px;width:42px;height:20px;border-top:1px solid #c4c4c4;background:#fff;text-align:center;font-size:10px;line-height:19px;color:#444;">8</div>
<div class="row bg1" style="top:168px"><div class="cell" style="left:3px">Spaghtetti</div><div class="cell" style="left:173px">Pasta</div><div class="dd" style="border-top-color:#b47a2c"></div><div class="cb cbu" style="left:285px;border-color:#b47a2c"></div><div class="cb cbu" style="left:380px;border-color:#b47a2c"></div><div class="cb" style="left:475px;background:#b47a2c"><svg width="15" height="15" style="position:absolute;left:0;top:0"><path d="M2.4 6.8L5.9 10.2L12.6 3.4" stroke="#fff" stroke-width="1.5" fill="none"/></svg></div><div class="cb cbu" style="left:570px;border-color:#b47a2c"></div><div class="cb cbu" style="left:665px;border-color:#b47a2c"></div></div>
<div class="a" style="left:1px;top:188px;width:42px;height:20px;border-top:1px solid #c4c4c4;background:#fff;text-align:center;font-size:10px;line-height:19px;color:#444;">9</div>
<div class="row" style="top:188px"><div class="cell" style="left:3px">Cereal</div><div class="cell" style="left:173px">Breakfast</div><div class="dd" style="border-top-color:#777777"></div><div class="cb" style="left:285px;background:#777777"><svg width="15" height="15" style="position:absolute;left:0;top:0"><path d="M2.4 6.8L5.9 10.2L12.6 3.4" stroke="#fff" stroke-width="1.5" fill="none"/></svg></div><div class="cb cbu" style="left:380px;border-color:#777777"></div><div class="cb cbu" style="left:475px;border-color:#777777"></div><div class="cb cbu" style="left:570px;border-color:#777777"></div><div class="cb cbu" style="left:665px;border-color:#777777"></div></div>
<div class="a" style="left:1px;top:208px;width:42px;height:20px;border-top:1px solid #c4c4c4;background:#fff;text-align:center;font-size:10px;line-height:19px;color:#444;">10</div>
<div class="row bg1" style="top:208px"><div class="cell" style="left:3px">Pancakes</div><div class="cell" style="left:173px">Breakfast</div><div class="dd" style="border-top-color:#b47a2c"></div><div class="cb" style="left:285px;background:#b47a2c"><svg width="15" height="15" style="position:absolute;left:0;top:0"><path d="M2.4 6.8L5.9 10.2L12.6 3.4" stroke="#fff" stroke-width="1.5" fill="none"/></svg></div><div class="cb cbu" style="left:380px;border-color:#b47a2c"></div><div class="cb cbu" style="left:475px;border-color:#b47a2c"></div><div class="cb cbu" style="left:570px;border-color:#b47a2c"></div><div class="cb cbu" style="left:665px;border-color:#b47a2c"></div></div>
<div class="a" style="left:1px;top:228px;width:42px;height:20px;border-top:1px solid #c4c4c4;background:#fff;text-align:center;font-size:10px;line-height:19px;color:#444;">11</div>
<div class="row" style="top:228px"><div class="cell" style="left:3px">Chips</div><div class="cell" style="left:173px">Snacks</div><div class="dd" style="border-top-color:#777777"></div><div class="cb cbu" style="left:285px;border-color:#777777"></div><div class="cb cbu" style="left:380px;border-color:#777777"></div><div class="cb cbu" style="left:475px;border-color:#777777"></div><div class="cb" style="left:570px;background:#777777"><svg width="15" height="15" style="position:absolute;left:0;top:0"><path d="M2.4 6.8L5.9 10.2L12.6 3.4" stroke="#fff" stroke-width="1.5" fill="none"/></svg></div><div class="cb cbu" style="left:665px;border-color:#777777"></div></div>
<div class="a" style="left:1px;top:248px;width:42px;height:20px;border-top:1px solid #c4c4c4;background:#fff;text-align:center;font-size:10px;line-height:19px;color:#444;">12</div>
<div class="row bg1" style="top:248px"><div class="cell" style="left:3px">Carrots &amp; Dip</div><div class="cell" style="left:173px">Snacks</div><div class="dd" style="border-top-color:#b47a2c"></div><div class="cb cbu" style="left:285px;border-color:#b47a2c"></div><div class="cb cbu" style="left:380px;border-color:#b47a2c"></div><div class="cb cbu" style="left:475px;border-color:#b47a2c"></div><div class="cb" style="left:570px;background:#b47a2c"><svg width="15" height="15" style="position:absolute;left:0;top:0"><path d="M2.4 6.8L5.9 10.2L12.6 3.4" stroke="#fff" stroke-width="1.5" fill="none"/></svg></div><div class="cb cbu" style="left:665px;border-color:#b47a2c"></div></div>
<div class="a" style="left:1px;top:268px;width:42px;height:20px;border-top:1px solid #c4c4c4;background:#fff;text-align:center;font-size:10px;line-height:19px;color:#444;">13</div>
<div class="row" style="top:268px"><div class="cell" style="left:3px">Beef Tacos</div><div class="cell" style="left:173px">Tacos</div><div class="dd" style="border-top-color:#777777"></div><div class="cb cbu" style="left:285px;border-color:#777777"></div><div class="cb cbu" style="left:380px;border-color:#777777"></div><div class="cb" style="left:475px;background:#777777"><svg width="15" height="15" style="position:absolute;left:0;top:0"><path d="M2.4 6.8L5.9 10.2L12.6 3.4" stroke="#fff" stroke-width="1.5" fill="none"/></svg></div><div class="cb cbu" style="left:570px;border-color:#777777"></div><div class="cb cbu" style="left:665px;border-color:#777777"></div></div>
<div class="a" style="left:1px;top:288px;width:42px;height:20px;border-top:1px solid #c4c4c4;background:#fff;text-align:center;font-size:10px;line-height:19px;color:#444;">14</div>
<div class="row bg1" style="top:288px"><div class="cell" style="left:3px">Parmesan Chicken</div><div class="cell" style="left:173px">Chicken</div><div class="dd" style="border-top-color:#b47a2c"></div><div class="cb cbu" style="left:285px;border-color:#b47a2c"></div><div class="cb cbu" style="left:380px;border-color:#b47a2c"></div><div class="cb" style="left:475px;background:#b47a2c"><svg width="15" height="15" style="position:absolute;left:0;top:0"><path d="M2.4 6.8L5.9 10.2L12.6 3.4" stroke="#fff" stroke-width="1.5" fill="none"/></svg></div><div class="cb cbu" style="left:570px;border-color:#b47a2c"></div><div class="cb cbu" style="left:665px;border-color:#b47a2c"></div></div>
<div class="a" style="left:1px;top:308px;width:42px;height:20px;border-top:1px solid #c4c4c4;background:#fff;text-align:center;font-size:10px;line-height:19px;color:#444;">15</div>
<div class="row" style="top:308px"><div class="cell" style="left:3px">Minestrone</div><div class="cell" style="left:173px">Soup</div><div class="dd" style="border-top-color:#777777"></div><div class="cb cbu" style="left:285px;border-color:#777777"></div><div class="cb cbu" style="left:380px;border-color:#777777"></div><div class="cb" style="left:475px;background:#777777"><svg width="15" height="15" style="position:absolute;left:0;top:0"><path d="M2.4 6.8L5.9 10.2L12.6 3.4" stroke="#fff" stroke-width="1.5" fill="none"/></svg></div><div class="cb cbu" style="left:570px;border-color:#777777"></div><div class="cb cbu" style="left:665px;border-color:#777777"></div></div>
<div class="a" style="left:1px;top:328px;width:42px;height:20px;border-top:1px solid #c4c4c4;background:#fff;text-align:center;font-size:10px;line-height:19px;color:#444;">16</div>
<div class="row bg1" style="top:328px"><div class="cell" style="left:3px">Hamburgers</div><div class="cell" style="left:173px">Beef</div><div class="dd" style="border-top-color:#b47a2c"></div><div class="cb cbu" style="left:285px;border-color:#b47a2c"></div><div class="cb cbu" style="left:380px;border-color:#b47a2c"></div><div class="cb" style="left:475px;background:#b47a2c"><svg width="15" height="15" style="position:absolute;left:0;top:0"><path d="M2.4 6.8L5.9 10.2L12.6 3.4" stroke="#fff" stroke-width="1.5" fill="none"/></svg></div><div class="cb cbu" style="left:570px;border-color:#b47a2c"></div><div class="cb cbu" style="left:665px;border-color:#b47a2c"></div></div>
<div class="a" style="left:1px;top:348px;width:42px;height:20px;border-top:1px solid #c4c4c4;background:#fff;text-align:center;font-size:10px;line-height:19px;color:#444;">17</div>
<div class="row" style="top:348px"><div class="cell" style="left:3px">Hot Dogs</div><div class="cell" style="left:173px">Pork</div><div class="dd" style="border-top-color:#777777"></div><div class="cb cbu" style="left:285px;border-color:#777777"></div><div class="cb cbu" style="left:380px;border-color:#777777"></div><div class="cb" style="left:475px;background:#777777"><svg width="15" height="15" style="position:absolute;left:0;top:0"><path d="M2.4 6.8L5.9 10.2L12.6 3.4" stroke="#fff" stroke-width="1.5" fill="none"/></svg></div><div class="cb cbu" style="left:570px;border-color:#777777"></div><div class="cb cbu" style="left:665px;border-color:#777777"></div></div>
<div class="a" style="left:1px;top:368px;width:42px;height:20px;border-top:1px solid #c4c4c4;background:#fff;text-align:center;font-size:10px;line-height:19px;color:#444;">18</div>
<div class="row bg1" style="top:368px"><div class="cell" style="left:3px">Chili</div><div class="cell" style="left:173px">Soup</div><div class="dd" style="border-top-color:#b47a2c"></div><div class="cb cbu" style="left:285px;border-color:#b47a2c"></div><div class="cb cbu" style="left:380px;border-color:#b47a2c"></div><div class="cb" style="left:475px;background:#b47a2c"><svg width="15" height="15" style="position:absolute;left:0;top:0"><path d="M2.4 6.8L5.9 10.2L12.6 3.4" stroke="#fff" stroke-width="1.5" fill="none"/></svg></div><div class="cb cbu" style="left:570px;border-color:#b47a2c"></div><div class="cb cbu" style="left:665px;border-color:#b47a2c"></div></div>
<div class="a" style="left:1px;top:388px;width:42px;height:20px;border-top:1px solid #c4c4c4;background:#fff;text-align:center;font-size:10px;line-height:19px;color:#444;">19</div>
<div class="row" style="top:388px"><div class="cell" style="left:3px">Creamy Potato Soup</div><div class="cell" style="left:173px">Soup</div><div class="dd" style="border-top-color:#777777"></div><div class="cb cbu" style="left:285px;border-color:#777777"></div><div class="cb cbu" style="left:380px;border-color:#777777"></div><div class="cb" style="left:475px;background:#777777"><svg width="15" height="15" style="position:absolute;left:0;top:0"><path d="M2.4 6.8L5.9 10.2L12.6 3.4" stroke="#fff" stroke-width="1.5" fill="none"/></svg></div><div class="cb cbu" style="left:570px;border-color:#777777"></div><div class="cb cbu" style="left:665px;border-color:#777777"></div></div>
<div class="a" style="left:1px;top:408px;width:42px;height:20px;border-top:1px solid #c4c4c4;background:#fff;text-align:center;font-size:10px;line-height:19px;color:#444;">20</div>
<div class="row bg1" style="top:408px"><div class="cell" style="left:3px">Chicken Stir Fry</div><div class="cell" style="left:173px">Asian</div><div class="dd" style="border-top-color:#b47a2c"></div><div class="cb cbu" style="left:285px;border-color:#b47a2c"></div><div class="cb cbu" style="left:380px;border-color:#b47a2c"></div><div class="cb" style="left:475px;background:#b47a2c"><svg width="15" height="15" style="position:absolute;left:0;top:0"><path d="M2.4 6.8L5.9 10.2L12.6 3.4" stroke="#fff" stroke-width="1.5" fill="none"/></svg></div><div class="cb cbu" style="left:570px;border-color:#b47a2c"></div><div class="cb cbu" style="left:665px;border-color:#b47a2c"></div></div>
<div class="a" style="left:1px;top:428px;width:42px;height:20px;border-top:1px solid #c4c4c4;background:#fff;text-align:center;font-size:10px;line-height:19px;color:#444;">21</div>
<div class="row" style="top:428px"><div class="cell" style="left:3px">Lasagna</div><div class="cell" style="left:173px">Pasta</div><div class="dd" style="border-top-color:#777777"></div><div class="cb cbu" style="left:285px;border-color:#777777"></div><div class="cb cbu" style="left:380px;border-color:#777777"></div><div class="cb" style="left:475px;background:#777777"><svg width="15" height="15" style="position:absolute;left:0;top:0"><path d="M2.4 6.8L5.9 10.2L12.6 3.4" stroke="#fff" stroke-width="1.5" fill="none"/></svg></div><div class="cb cbu" style="left:570px;border-color:#777777"></div><div class="cb cbu" style="left:665px;border-color:#777777"></div></div>
<div class="a" style="left:1px;top:448px;width:42px;height:20px;border-top:1px solid #c4c4c4;background:#fff;text-align:center;font-size:10px;line-height:19px;color:#444;">22</div>
<div class="row bg1" style="top:448px"><div class="cell" style="left:3px">Salmon</div><div class="cell" style="left:173px">Seafood</div><div class="dd" style="border-top-color:#b47a2c"></div><div class="cb cbu" style="left:285px;border-color:#b47a2c"></div><div class="cb cbu" style="left:380px;border-color:#b47a2c"></div><div class="cb" style="left:475px;background:#b47a2c"><svg width="15" height="15" style="position:absolute;left:0;top:0"><path d="M2.4 6.8L5.9 10.2L12.6 3.4" stroke="#fff" stroke-width="1.5" fill="none"/></svg></div><div class="cb cbu" style="left:570px;border-color:#b47a2c"></div><div class="cb cbu" style="left:665px;border-color:#b47a2c"></div></div>
<div class="a" style="left:1px;top:468px;width:42px;height:20px;border-top:1px solid #c4c4c4;background:#fff;text-align:center;font-size:10px;line-height:19px;color:#444;">23</div>
<div class="row" style="top:468px"><div class="cell" style="left:3px">French Fries</div><div class="cell" style="left:173px">Sides</div><div class="dd" style="border-top-color:#777777"></div><div class="cb cbu" style="left:285px;border-color:#777777"></div><div class="cb cbu" style="left:380px;border-color:#777777"></div><div class="cb cbu" style="left:475px;border-color:#777777"></div><div class="cb cbu" style="left:570px;border-color:#777777"></div><div class="cb" style="left:665px;background:#777777"><svg width="15" height="15" style="position:absolute;left:0;top:0"><path d="M2.4 6.8L5.9 10.2L12.6 3.4" stroke="#fff" stroke-width="1.5" fill="none"/></svg></div></div>
<div class="a" style="left:1px;top:488px;width:42px;height:20px;border-top:1px solid #c4c4c4;background:#fff;text-align:center;font-size:10px;line-height:19px;color:#444;">24</div>
<div class="row bg1" style="top:488px"><div class="cell" style="left:3px">Mashed Potatoes</div><div class="cell" style="left:173px">Sides</div><div class="dd" style="border-top-color:#b47a2c"></div><div class="cb cbu" style="left:285px;border-color:#b47a2c"></div><div class="cb cbu" style="left:380px;border-color:#b47a2c"></div><div class="cb cbu" style="left:475px;border-color:#b47a2c"></div><div class="cb cbu" style="left:570px;border-color:#b47a2c"></div><div class="cb" style="left:665px;background:#b47a2c"><svg width="15" height="15" style="position:absolute;left:0;top:0"><path d="M2.4 6.8L5.9 10.2L12.6 3.4" stroke="#fff" stroke-width="1.5" fill="none"/></svg></div></div>
<div class="a" style="left:1px;top:508px;width:42px;height:20px;border-top:1px solid #c4c4c4;background:#fff;text-align:center;font-size:10px;line-height:19px;color:#444;">25</div>
<div class="row" style="top:508px"><div class="cell" style="left:3px">Green Beans</div><div class="cell" style="left:173px">Sides</div><div class="dd" style="border-top-color:#777777"></div><div class="cb cbu" style="left:285px;border-color:#777777"></div><div class="cb cbu" style="left:380px;border-color:#777777"></div><div class="cb cbu" style="left:475px;border-color:#777777"></div><div class="cb cbu" style="left:570px;border-color:#777777"></div><div class="cb" style="left:665px;background:#777777"><svg width="15" height="15" style="position:absolute;left:0;top:0"><path d="M2.4 6.8L5.9 10.2L12.6 3.4" stroke="#fff" stroke-width="1.5" fill="none"/></svg></div></div>
<div class="a" style="left:1px;top:528px;width:42px;height:20px;border-top:1px solid #c4c4c4;background:#fff;text-align:center;font-size:10px;line-height:19px;color:#444;">26</div>
<div class="row bg1" style="top:528px"><div class="cell" style="left:3px">Beef Stew</div><div class="cell" style="left:173px">Soup</div><div class="dd" style="border-top-color:#b47a2c"></div><div class="cb cbu" style="left:285px;border-color:#b47a2c"></div><div class="cb" style="left:380px;background:#b47a2c"><svg width="15" height="15" style="position:absolute;left:0;top:0"><path d="M2.4 6.8L5.9 10.2L12.6 3.4" stroke="#fff" stroke-width="1.5" fill="none"/></svg></div><div class="cb" style="left:475px;background:#b47a2c"><svg width="15" height="15" style="position:absolute;left:0;top:0"><path d="M2.4 6.8L5.9 10.2L12.6 3.4" stroke="#fff" stroke-width="1.5" fill="none"/></svg></div><div class="cb cbu" style="left:570px;border-color:#b47a2c"></div><div class="cb cbu" style="left:665px;border-color:#b47a2c"></div></div>
<div class="a" style="left:1px;top:548px;width:42px;height:20px;border-top:1px solid #c4c4c4;background:#fff;text-align:center;font-size:10px;line-height:19px;color:#444;">27</div>
<div class="row" style="top:548px"><div class="cell" style="left:3px">Rice</div><div class="cell" style="left:173px">Sides</div><div class="dd" style="border-top-color:#777777"></div><div class="cb cbu" style="left:285px;border-color:#777777"></div><div class="cb cbu" style="left:380px;border-color:#777777"></div><div class="cb cbu" style="left:475px;border-color:#777777"></div><div class="cb cbu" style="left:570px;border-color:#777777"></div><div class="cb" style="left:665px;background:#777777"><svg width="15" height="15" style="position:absolute;left:0;top:0"><path d="M2.4 6.8L5.9 10.2L12.6 3.4" stroke="#fff" stroke-width="1.5" fill="none"/></svg></div></div>
<div class="a" style="left:1px;top:568px;width:42px;height:20px;border-top:1px solid #c4c4c4;background:#fff;text-align:center;font-size:10px;line-height:19px;color:#444;">28</div>
<div class="row bg1" style="top:568px"><div class="cell" style="left:3px">Meatloaf</div><div class="cell" style="left:173px">Beef</div><div class="dd" style="border-top-color:#b47a2c"></div><div class="cb cbu" style="left:285px;border-color:#b47a2c"></div><div class="cb cbu" style="left:380px;border-color:#b47a2c"></div><div class="cb" style="left:475px;background:#b47a2c"><svg width="15" height="15" style="position:absolute;left:0;top:0"><path d="M2.4 6.8L5.9 10.2L12.6 3.4" stroke="#fff" stroke-width="1.5" fill="none"/></svg></div><div class="cb cbu" style="left:570px;border-color:#b47a2c"></div><div class="cb cbu" style="left:665px;border-color:#b47a2c"></div></div>
<div class="a" style="left:1px;top:588px;width:42px;height:20px;border-top:1px solid #c4c4c4;background:#fff;text-align:center;font-size:10px;line-height:19px;color:#444;">29</div>
<div class="row" style="top:588px"><div class="cell" style="left:3px">Frittata</div><div class="cell" style="left:173px">Breakfast</div><div class="dd" style="border-top-color:#777777"></div><div class="cb" style="left:285px;background:#777777"><svg width="15" height="15" style="position:absolute;left:0;top:0"><path d="M2.4 6.8L5.9 10.2L12.6 3.4" stroke="#fff" stroke-width="1.5" fill="none"/></svg></div><div class="cb cbu" style="left:380px;border-color:#777777"></div><div class="cb cbu" style="left:475px;border-color:#777777"></div><div class="cb cbu" style="left:570px;border-color:#777777"></div><div class="cb cbu" style="left:665px;border-color:#777777"></div></div>
<div class="a" style="left:1px;top:608px;width:42px;height:20px;border-top:1px solid #c4c4c4;background:#d3e3fd;text-align:center;font-size:10px;line-height:19px;color:#0b1f44;font-weight:700;">30</div>
<div class="row bg1" style="top:608px"><div class="cell" style="left:3px">Triscuits &amp; Cheese</div><div class="cell" style="left:173px">Snacks</div><div class="dd" style="border-top-color:#b47a2c"></div><div class="cb cbu" style="left:285px;border-color:#b47a2c"></div><div class="cb cbu" style="left:380px;border-color:#b47a2c"></div><div class="cb cbu" style="left:475px;border-color:#b47a2c"></div><div class="cb" style="left:570px;background:#b47a2c"><svg width="15" height="15" style="position:absolute;left:0;top:0"><path d="M2.4 6.8L5.9 10.2L12.6 3.4" stroke="#fff" stroke-width="1.5" fill="none"/></svg></div><div class="cb cbu" style="left:665px;border-color:#b47a2c"></div></div>
<div class="a" style="left:1px;top:628px;width:42px;height:20px;border-top:1px solid #c4c4c4;background:#fff;text-align:center;font-size:10px;line-height:19px;color:#444;">31</div>
<div class="row" style="top:628px"><div class="dd" style="border-top-color:#777777"></div><div class="cb cbu" style="left:285px;border-color:#777777"></div><div class="cb cbu" style="left:380px;border-color:#777777"></div><div class="cb cbu" style="left:475px;border-color:#777777"></div><div class="cb cbu" style="left:570px;border-color:#777777"></div><div class="cb cbu" style="left:665px;border-color:#777777"></div></div>
<div class="a" style="left:1px;top:648px;width:42px;height:20px;border-top:1px solid #c4c4c4;background:#fff;text-align:center;font-size:10px;line-height:19px;color:#444;">32</div>
<div class="row bg1" style="top:648px"><div class="dd" style="border-top-color:#b47a2c"></div><div class="cb cbu" style="left:285px;border-color:#b47a2c"></div><div class="cb cbu" style="left:380px;border-color:#b47a2c"></div><div class="cb cbu" style="left:475px;border-color:#b47a2c"></div><div class="cb cbu" style="left:570px;border-color:#b47a2c"></div><div class="cb cbu" style="left:665px;border-color:#b47a2c"></div></div>
<div class="a" style="left:1px;top:668px;width:42px;height:20px;border-top:1px solid #c4c4c4;background:#fff;text-align:center;font-size:10px;line-height:19px;color:#444;">33</div>
<div class="row" style="top:668px"><div class="dd" style="border-top-color:#777777"></div><div class="cb cbu" style="left:285px;border-color:#777777"></div><div class="cb cbu" style="left:380px;border-color:#777777"></div><div class="cb cbu" style="left:475px;border-color:#777777"></div><div class="cb cbu" style="left:570px;border-color:#777777"></div><div class="cb cbu" style="left:665px;border-color:#777777"></div></div>
<div class="a" style="left:1px;top:688px;width:42px;height:20px;border-top:1px solid #c4c4c4;background:#fff;text-align:center;font-size:10px;line-height:19px;color:#444;">34</div>
<div class="row bg1" style="top:688px"><div class="dd" style="border-top-color:#b47a2c"></div><div class="cb cbu" style="left:285px;border-color:#b47a2c"></div><div class="cb cbu" style="left:380px;border-color:#b47a2c"></div><div class="cb cbu" style="left:475px;border-color:#b47a2c"></div><div class="cb cbu" style="left:570px;border-color:#b47a2c"></div><div class="cb cbu" style="left:665px;border-color:#b47a2c"></div></div>
<div class="a" style="left:1px;top:708px;width:42px;height:20px;border-top:1px solid #c4c4c4;background:#fff;text-align:center;font-size:10px;line-height:19px;color:#444;">35</div>
<div class="row" style="top:708px"><div class="dd" style="border-top-color:#777777"></div><div class="cb cbu" style="left:285px;border-color:#777777"></div><div class="cb cbu" style="left:380px;border-color:#777777"></div><div class="cb cbu" style="left:475px;border-color:#777777"></div><div class="cb cbu" style="left:570px;border-color:#777777"></div><div class="cb cbu" style="left:665px;border-color:#777777"></div></div>
<div class="a" style="left:1px;top:728px;width:42px;height:20px;border-top:1px solid #c4c4c4;background:#fff;text-align:center;font-size:10px;line-height:19px;color:#444;">36</div>
<div class="row bg1" style="top:728px"><div class="dd" style="border-top-color:#b47a2c"></div><div class="cb cbu" style="left:285px;border-color:#b47a2c"></div><div class="cb cbu" style="left:380px;border-color:#b47a2c"></div><div class="cb cbu" style="left:475px;border-color:#b47a2c"></div><div class="cb cbu" style="left:570px;border-color:#b47a2c"></div><div class="cb cbu" style="left:665px;border-color:#b47a2c"></div></div>
<div class="a" style="left:1px;top:748px;width:42px;height:20px;border-top:1px solid #c4c4c4;background:#fff;text-align:center;font-size:10px;line-height:19px;color:#444;">37</div>
<div class="row" style="top:748px"><div class="dd" style="border-top-color:#777777"></div><div class="cb cbu" style="left:285px;border-color:#777777"></div><div class="cb cbu" style="left:380px;border-color:#777777"></div><div class="cb cbu" style="left:475px;border-color:#777777"></div><div class="cb cbu" style="left:570px;border-color:#777777"></div><div class="cb cbu" style="left:665px;border-color:#777777"></div></div>
<div class="a" style="left:1px;top:768px;width:42px;height:20px;border-top:1px solid #c4c4c4;background:#fff;text-align:center;font-size:10px;line-height:19px;color:#444;">38</div>
<div class="row bg1" style="top:768px"><div class="dd" style="border-top-color:#b47a2c"></div><div class="cb cbu" style="left:285px;border-color:#b47a2c"></div><div class="cb cbu" style="left:380px;border-color:#b47a2c"></div><div class="cb cbu" style="left:475px;border-color:#b47a2c"></div><div class="cb cbu" style="left:570px;border-color:#b47a2c"></div><div class="cb cbu" style="left:665px;border-color:#b47a2c"></div></div>
<div class="a" style="left:1px;top:788px;width:42px;height:20px;border-top:1px solid #c4c4c4;background:#fff;text-align:center;font-size:10px;line-height:19px;color:#444;">39</div>
<div class="row" style="top:788px"><div class="dd" style="border-top-color:#777777"></div><div class="cb cbu" style="left:285px;border-color:#777777"></div><div class="cb cbu" style="left:380px;border-color:#777777"></div><div class="cb cbu" style="left:475px;border-color:#777777"></div><div class="cb cbu" style="left:570px;border-color:#777777"></div><div class="cb cbu" style="left:665px;border-color:#777777"></div></div>
<div class="a" style="left:1px;top:808px;width:42px;height:20px;border-top:1px solid #c4c4c4;background:#fff;text-align:center;font-size:10px;line-height:19px;color:#444;">40</div>
<div class="row bg1" style="top:808px"><div class="dd" style="border-top-color:#b47a2c"></div><div class="cb cbu" style="left:285px;border-color:#b47a2c"></div><div class="cb cbu" style="left:380px;border-color:#b47a2c"></div><div class="cb cbu" style="left:475px;border-color:#b47a2c"></div><div class="cb cbu" style="left:570px;border-color:#b47a2c"></div><div class="cb cbu" style="left:665px;border-color:#b47a2c"></div></div>
<div class="a" style="left:1px;top:828px;width:42px;height:20px;border-top:1px solid #c4c4c4;background:#fff;text-align:center;font-size:10px;line-height:19px;color:#444;">41</div>
<div class="row" style="top:828px"><div class="dd" style="border-top-color:#777777"></div><div class="cb cbu" style="left:285px;border-color:#777777"></div><div class="cb cbu" style="left:380px;border-color:#777777"></div><div class="cb cbu" style="left:475px;border-color:#777777"></div><div class="cb cbu" style="left:570px;border-color:#777777"></div><div class="cb cbu" style="left:665px;border-color:#777777"></div></div>
<div class="a" style="left:1px;top:848px;width:42px;height:20px;border-top:1px solid #c4c4c4;background:#fff;text-align:center;font-size:10px;line-height:19px;color:#444;">42</div>
<div class="row bg1" style="top:848px"><div class="dd" style="border-top-color:#b47a2c"></div><div class="cb cbu" style="left:285px;border-color:#b47a2c"></div><div class="cb cbu" style="left:380px;border-color:#b47a2c"></div><div class="cb cbu" style="left:475px;border-color:#b47a2c"></div><div class="cb cbu" style="left:570px;border-color:#b47a2c"></div><div class="cb cbu" style="left:665px;border-color:#b47a2c"></div></div>
<div class="a" style="left:611px;top:609px;width:96px;height:20px;border:1.5px solid #1a73e8"></div>
<div class="a" style="left:702px;top:624px;width:10px;height:10px;background:#0b57d0;border:1px solid #fff;border-radius:50%"></div>
<div class="a" style="left:1224px;top:0;width:11px;height:874px;background:#fff;border-left:1px solid #e1e1e1"></div>
<div class="a" style="left:1225px;top:0;width:10px;height:23px;background:#f8f8f8"></div>
<div class="a" style="left:1224px;top:22px;width:11px;height:1px;background:#c4c4c4"></div>
<div class="a" style="left:1225px;top:24px;width:9px;height:32px;background:#dadce0;border-radius:4.5px"></div>
</div><!-- horizontal scrollbar -->
<div class="a" style="left:1px;top:1077px;width:1234px;height:12px;background:#fff"></div>
<div class="a" style="left:1px;top:1077px;width:43px;height:12px;background:#f8f8f8;border-right:1.5px solid #dcdcdc"></div>
<div class="a" style="left:1px;top:1077px;width:1223px;height:1px;background:#e3e3e3"></div>
<div class="a" style="left:46px;top:1078px;width:548px;height:9px;background:#dadce0;border-radius:4.5px"></div>
<div class="a" style="left:1196px;top:1077px;width:28px;height:12px;background:#f8f8f8;border-left:1px solid #e3e3e3"></div>
<div class="a" style="left:1210px;top:1077px;width:1px;height:12px;background:#e3e3e3"></div>
<div class="a" style="left:1201px;top:1080px;border-top:3px solid transparent;border-bottom:3px solid transparent;border-right:3px solid #777"></div>
<div class="a" style="left:1217px;top:1080px;border-top:3px solid transparent;border-bottom:3px solid transparent;border-left:3px solid #777"></div>
<div class="a" style="left:1224px;top:1047px;width:11px;height:30px;background:#f8f8f8;border-left:1px solid #e3e3e3;border-top:1px solid #e3e3e3"></div>
<div class="a" style="left:1225px;top:1061px;width:10px;height:1px;background:#e3e3e3"></div>
<div class="a" style="left:1224px;top:1076px;width:11px;height:1px;background:#e3e3e3"></div>
<div class="a" style="left:1227px;top:1052px;border-left:3px solid transparent;border-right:3px solid transparent;border-bottom:3px solid #777"></div>
<div class="a" style="left:1227px;top:1067px;border-left:3px solid transparent;border-right:3px solid transparent;border-top:3px solid #777"></div>
<div class="a" style="left:1224px;top:1077px;width:11px;height:12px;background:#f8f8f8;border-left:1px solid #e3e3e3"></div>
<!-- tab bar -->
<div class="a" style="left:1px;top:1089px;width:1234px;height:1px;background:#e1e3e6"></div>
<div class="a" style="left:1px;top:1090px;width:1287px;height:33px;background:#f9fbfd"></div>
<svg class="ib" style="left:54px;top:1102px" width="11" height="11"><path d="M5.5 0V11M0 5.5H11" stroke="#444746" stroke-width="1.6"/></svg>
<svg class="ib" style="left:89px;top:1103px" width="14" height="10"><path d="M0 1H14M0 5H14M0 9H14" stroke="#444746" stroke-width="1.6"/></svg>
<div class="a" style="left:342px;top:1090px;width:94px;height:33px;background:#e1e9f7"></div>
<div class="t" style="top:1099px;font-size:14.2px;line-height:17px;color:#444746;left:0;-webkit-text-stroke:0.25px currentColor">
<span class="t" style="left:139px">How to Use</span><span class="t" style="left:254px">Calendar</span><span class="t" style="left:353.5px;color:#0b57d0;-webkit-text-stroke:0.6px #0b57d0;letter-spacing:0.1px">Recipes</span><span class="t" style="left:447px">Breakfast</span><span class="t" style="left:552px">Lunch</span><span class="t" style="left:633px">Snacks</span><span class="t" style="left:722px">Dinner</span><span class="t" style="left:806px">License &amp; Terms</span>
</div>
<div class="a" style="left:223px;top:1106px;border-left:3.5px solid transparent;border-right:3.5px solid transparent;border-top:4px solid #444746"></div>
<div class="a" style="left:323.5px;top:1106px;border-left:3.5px solid transparent;border-right:3.5px solid transparent;border-top:4px solid #444746"></div>
<div class="a" style="left:417.5px;top:1106px;border-left:3.5px solid transparent;border-right:3.5px solid transparent;border-top:4px solid #0b57d0"></div>
<div class="a" style="left:521px;top:1106px;border-left:3.5px solid transparent;border-right:3.5px solid transparent;border-top:4px solid #444746"></div>
<div class="a" style="left:603px;top:1106px;border-left:3.5px solid transparent;border-right:3.5px solid transparent;border-top:4px solid #444746"></div>
<div class="a" style="left:690px;top:1106px;border-left:3.5px solid transparent;border-right:3.5px solid transparent;border-top:4px solid #444746"></div>
<div class="a" style="left:775px;top:1106px;border-left:3.5px solid transparent;border-right:3.5px solid transparent;border-top:4px solid #444746"></div>
<div class="a" style="left:922px;top:1106px;border-left:3.5px solid transparent;border-right:3.5px solid transparent;border-top:4px solid #444746"></div>
<svg class="ib" style="left:1258px;top:1092px" width="8" height="11" viewBox="0 0 8 11"><path d="M1.5 1L6.3 5.5L1.5 10" stroke="#444746" stroke-width="1.5" fill="none"/></svg>
<!-- side panel -->
<div class="a" style="left:1235px;top:208px;width:54px;height:881px;background:#f9fbfd"></div>
<svg class="ib" style="left:1253px;top:181.5px" width="18" height="18" viewBox="0 0 18 18"><path d="M0 4V16A2 2 0 0 0 2 18H4V4Z" fill="#4285f4"/><path d="M2 0H16A2 2 0 0 1 18 2V4H0V2A2 2 0 0 1 2 0Z" fill="#4285f4"/><path d="M14 0H16A2 2 0 0 1 18 2V4H14Z" fill="#1967d2"/><rect x="14" y="4" width="4" height="10" fill="#fbbc04"/><rect x="4" y="14" width="10" height="4" fill="#34a853"/><path d="M0 14H4V18H2A2 2 0 0 1 0 16Z" fill="#188038"/><path d="M14 14H18L14 18Z" fill="#ea4335"/><rect x="4" y="4" width="10" height="10" fill="#fff"/><text x="9" y="12.4" font-size="8" font-family="Liberation Sans" font-weight="700" fill="#4285f4" text-anchor="middle" letter-spacing="-0.3">31</text></svg>
<svg class="ib" style="left:1253px;top:234.5px" width="18" height="18" viewBox="0 0 18 18"><rect x="0" y="0" width="18" height="18" rx="2" fill="#fbbc04"/><circle cx="9" cy="8" r="3.7" fill="#fff"/><rect x="7.2" y="10" width="3.6" height="2" fill="#fff"/><rect x="7.4" y="12.8" width="3.2" height="1" fill="#fff"/></svg>
<svg class="ib" style="left:1254px;top:286.2px" width="17" height="17" viewBox="0 0 17 17"><circle cx="8" cy="9" r="6.5" stroke="#1a73e8" stroke-width="2.4" fill="none"/><path d="M5 9L7.5 11.5L15.5 2.5" stroke="#1a73e8" stroke-width="2.4" fill="none"/></svg>
<svg class="ib" style="left:1256px;top:340px" width="14" height="16" viewBox="0 0 14 16"><circle cx="7" cy="3.6" r="3.4" fill="#1967d2"/><path d="M0 16V12A4 4 0 0 1 4 8H10A4 4 0 0 1 14 12V16Z" fill="#1967d2"/></svg>
<svg class="ib" style="left:1255.5px;top:391.5px" width="14" height="18" viewBox="0 0 14 18"><defs><clipPath id="pc"><path d="M7 0A6.6 6.6 0 0 1 13.6 6.6C13.6 10.3 9.6 13.4 7 18C4.4 13.4 0.4 10.3 0.4 6.6A6.6 6.6 0 0 1 7 0Z"/></clipPath></defs><g clip-path="url(#pc)"><rect width="14" height="18" fill="#34a853"/><polygon points="0,0 10.5,0 4.5,6.5 0,6.5" fill="#ea4335"/><polygon points="0,6.5 4.5,6.5 1.5,11.5 0,11.5" fill="#fbbc04"/><polygon points="10.5,0 14,0 14,7.5 9.5,7.5 8.5,4.5" fill="#4285f4"/></g><circle cx="7" cy="6.6" r="2.4" fill="#fff"/></svg>
<div class="a" style="left:1253px;top:442px;width:19px;height:1px;background:#c7c7c7"></div>
<svg class="ib" style="left:1255px;top:529px" width="15" height="15"><path d="M7.5 0V15M0 7.5H15" stroke="#1f1f1f" stroke-width="1.7"/></svg>
<!-- window borders -->
<div id="wb"></div>

</div></body></html>
